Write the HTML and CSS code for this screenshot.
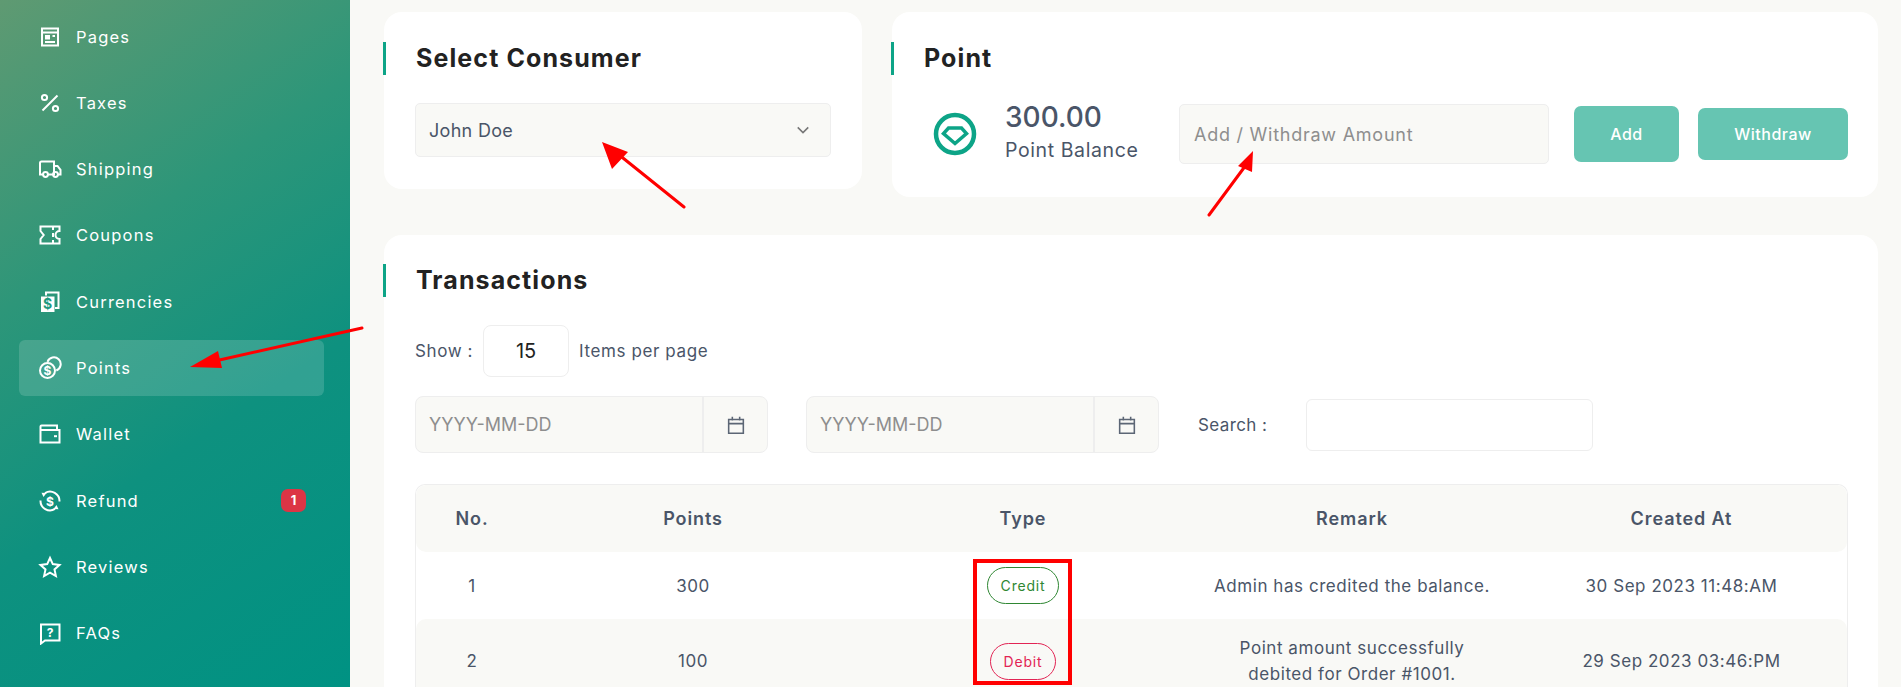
FILE: index.html
```html
<!DOCTYPE html>
<html lang="en">

<head>
   <meta charset="UTF-8">
   <meta name="viewport" content="width=device-width, initial-scale=1.0">
   <title>Points</title>
   <link rel="stylesheet" href="styles.css">
</head>

<body>
   <div class="page">
      <!-- Sidebar -->
      <nav class="sidebar">
         <a class="nav-item">
            <svg class="nav-icon" viewBox="0 0 24 24"><path d="M4 3.500h16v17H4zM4 7.500h16"/><path class="solid" d="M7 10h5v4.500H7z"/><path d="M14.500 11H17M7 17h10"/></svg>
            <span>Pages</span>
         </a>
         <a class="nav-item">
            <svg class="nav-icon" viewBox="0 0 24 24"><circle cx="6.500" cy="6.500" r="2.600"/><circle cx="17.500" cy="17.500" r="2.600"/><path d="M19.500 4.500l-15 15"/></svg>
            <span>Taxes</span>
         </a>
         <a class="nav-item">
            <svg class="nav-icon" viewBox="0 0 24 24"><path d="M5 17.500H2V6a1.500 1.500 0 0 1 1.500-1.500H16v13H10M16 9h3.500l3 3.800v4.700H20M16 17.500H15"/><circle cx="7.500" cy="17.500" r="2.400"/><circle cx="17.500" cy="17.500" r="2.400"/></svg>
            <span>Shipping</span>
         </a>
         <a class="nav-item">
            <svg class="nav-icon" viewBox="0 0 24 24"><path d="M2.500 3.500h19V8a3.800 3.800 0 0 0 0 8v4.500h-19V16l3.200-4-3.200-4z"/><path d="M15 3.500V7M15 10v4M15 17v3.500"/></svg>
            <span>Coupons</span>
         </a>
         <a class="nav-item">
            <svg class="nav-icon" viewBox="0 0 24 24"><path d="M8 5.500v-3h12.500v15.500H17"/><path class="solid" d="M3 6.500h13.500V22H3z"/><text class="nav-glyph" x="9.700" y="19">$</text></svg>
            <span>Currencies</span>
         </a>
         <a class="nav-item active">
            <svg class="nav-icon" viewBox="0 0 24 24"><circle cx="9.500" cy="14.500" r="7.500"/><path d="M9.500 5.800A6.800 6.800 0 1 1 18.300 14.500"/><text class="nav-glyph outline" x="9.500" y="19">$</text></svg>
            <span>Points</span>
         </a>
         <a class="nav-item">
            <svg class="nav-icon" viewBox="0 0 24 24"><path d="M2.500 8V20.500H21.500V8H2.500zM2.500 8V4.500a1 1 0 0 1 1-1H19V8"/><path class="solid" d="M16 13.200h3v2h-3z"/></svg>
            <span>Wallet</span>
         </a>
         <a class="nav-item">
            <svg class="nav-icon" viewBox="0 0 24 24"><path d="M7 4.100A9.500 9.500 0 0 1 21.500 12.500M17 19.900A9.500 9.500 0 0 1 2.500 11.500"/><path class="solid" d="M3.500 3.800l5 .2-3 4zM20.500 20.200l-5-.2 3-4z"/><text class="nav-glyph outline" x="12" y="16.600">$</text></svg>
            <span>Refund</span>
            <b class="nav-badge">1</b>
         </a>
         <a class="nav-item">
            <svg class="nav-icon" viewBox="0 0 24 24"><path d="M12 3l2.800 6.100 6.700.8-5 4.500 1.400 6.600-5.900-3.300-5.900 3.300 1.400-6.600-5-4.500 6.700-.8z"/></svg>
            <span>Reviews</span>
         </a>
         <a class="nav-item">
            <svg class="nav-icon" viewBox="0 0 24 24"><path d="M3 3.500h18.500v16H7L3 22.500z"/><text class="nav-glyph outline" x="12.200" y="16">?</text></svg>
            <span>FAQs</span>
         </a>
      </nav>

      <main class="content">
         <div class="top-row">
            <section class="card card-consumer">
               <h2 class="card-title">Select Consumer</h2>
               <div class="select-box">
                  <span>John Doe</span>
                  <svg class="chevron" viewBox="0 0 16 16"><path d="M2 5l6 6 6-6"/></svg>
               </div>
            </section>

            <section class="card card-point">
               <h2 class="card-title">Point</h2>
               <div class="point-row">
                  <svg class="point-icon" viewBox="0 0 44 44"><circle cx="22" cy="22" r="19"/><path class="point-gem" d="M15.500 16h13l5 5.500-11.500 10-11.500-10z"/></svg>
                  <div class="balance">
                     <div class="balance-value">300.00</div>
                     <div class="balance-label">Point Balance</div>
                  </div>
                  <input class="field amount" type="text" placeholder="Add / Withdraw Amount">
                  <button class="btn btn-add">Add</button>
                  <button class="btn btn-withdraw">Withdraw</button>
               </div>
            </section>
         </div>

         <section class="card card-transactions">
            <h2 class="card-title">Transactions</h2>

            <div class="show-row">
               <span class="show-label">Show :</span>
               <div class="show-count">15</div>
               <span>Items per page</span>
            </div>

            <div class="filter-row">
               <div class="date-group">
                  <input class="date-input" type="text" placeholder="YYYY-MM-DD">
                  <span class="date-btn"><svg viewBox="0 0 24 24"><path d="M4 6h16v15H4zM4 10.500h16M8 3v4M16 3v4"/></svg></span>
               </div>
               <div class="date-group">
                  <input class="date-input" type="text" placeholder="YYYY-MM-DD">
                  <span class="date-btn"><svg viewBox="0 0 24 24"><path d="M4 6h16v15H4zM4 10.500h16M8 3v4M16 3v4"/></svg></span>
               </div>
               <label class="search-label">Search :</label>
               <input class="search-input" type="text">
            </div>

            <div class="table-wrap">
               <table class="tx-table">
                  <colgroup>
                     <col class="col-no">
                     <col class="col-points">
                     <col class="col-type">
                     <col class="col-remark">
                     <col class="col-date">
                  </colgroup>
                  <thead>
                     <tr>
                        <th>No.</th>
                        <th>Points</th>
                        <th>Type</th>
                        <th>Remark</th>
                        <th>Created At</th>
                     </tr>
                  </thead>
                  <tbody>
                     <tr>
                        <td>1</td>
                        <td>300</td>
                        <td><span class="pill pill-credit">Credit</span></td>
                        <td>Admin has credited the balance.</td>
                        <td>30 Sep 2023 11:48:AM</td>
                     </tr>
                     <tr class="row-alt">
                        <td>2</td>
                        <td>100</td>
                        <td><span class="pill pill-debit">Debit</span></td>
                        <td class="cell-wrap">Point amount successfully<br>debited for Order #1001.</td>
                        <td>29 Sep 2023 03:46:PM</td>
                     </tr>
                  </tbody>
               </table>
            </div>
         </section>
      </main>
   </div>

   <!-- Anotaciones rojas sobre la captura -->
   <svg class="marks" viewBox="0 0 1901 687">
      <path class="mark-line" d="M362 328L215 361M684 207L618 154M1209 215L1246 165"/>
      <path class="mark-head" d="M190 367L218 351L222 368zM602 142L628 152L612 169zM1253 151L1252 172L1238 166z"/>
      <rect class="mark-box" x="975" y="561" width="95" height="122"/>
   </svg>
</body>

</html>
```

FILE: styles.css
```css
* {
   box-sizing: border-box;
}

html,
body {
   margin: 0;
   height: 100%;
   overflow: hidden;
}

body {
   font-family: Inter, "Liberation Sans", sans-serif;
   color: #4a5568;
   background: #f9f9f6;
}

.page {
   display: flex;
   height: 687px;
   overflow: hidden;
}

/* Sidebar */
.sidebar {
   flex: 0 0 350px;
   display: flex;
   flex-direction: column;
   gap: 10.3px;
   padding: 8.500px 26px 0 19px;
   background: linear-gradient(146deg, #5f9a72 0%, #2d9679 34%, #0e917f 62%, #009283 100%);
}

.nav-item {
   display: flex;
   align-items: center;
   flex: 0 0 56px;
   padding: 0 19px;
   border-radius: 6px;
   color: #fff;
   font-size: 16.5px;
   letter-spacing: 1.2px;
}

.nav-item.active {
   background: rgba(255, 255, 255, 0.15);
}

.nav-icon {
   flex: 0 0 24px;
   width: 24px;
   height: 24px;
   margin-right: 14px;
   fill: none;
   stroke: #fff;
   stroke-width: 2;
}

.nav-icon .solid {
   fill: #fff;
   stroke: none;
}

.nav-glyph {
   fill: #1f9a80;
   stroke: none;
   font-size: 14px;
   font-weight: 700;
   letter-spacing: 0;
   text-anchor: middle;
}

.nav-glyph.outline {
   fill: #fff;
   font-size: 12px;
}

.nav-badge {
   margin-left: auto;
   margin-right: -1px;
   width: 25px;
   height: 23px;
   border-radius: 7px;
   background: #dc3545;
   font-size: 13px;
   font-weight: 700;
   letter-spacing: 0;
   line-height: 23px;
   text-align: center;
}

/* Main */
.content {
   flex: 1;
   padding: 12px 23px 0 34px;
}

.top-row {
   display: flex;
   align-items: flex-start;
   gap: 30px;
   margin-bottom: 38px;
}

.card {
   background: #fff;
   border-radius: 18px;
   padding: 30px 30px 32px 31px;
}

.card-consumer {
   flex: 0 0 478px;
   padding-right: 31px;
}

.card-point {
   flex: 1;
}

.card-title {
   margin: 0 0 28px -32px;
   padding-left: 30px;
   border-left: 3px solid #0da487;
   height: 33px;
   font-size: 25px;
   font-weight: 700;
   line-height: 33px;
   letter-spacing: 1.100px;
   color: #222;
}

.select-box {
   display: flex;
   align-items: center;
   justify-content: space-between;
   height: 54px;
   padding: 0 20px 0 13px;
   background: #f9f9f6;
   border: 1px solid #eee;
   border-radius: 5px;
   font-size: 18px;
   letter-spacing: 0.3px;
}

.chevron {
   width: 14px;
   height: 14px;
   fill: none;
   stroke: #777;
   stroke-width: 1.8;
}

.point-row {
   display: flex;
   align-items: center;
   height: 62px;
}

.point-icon {
   flex: 0 0 44px;
   width: 44px;
   height: 44px;
   margin: 0 28px 0 10px;
   fill: none;
   stroke: #0da487;
   stroke-width: 4.500;
}

.point-gem {
   stroke-width: 3.500;
}

.balance {
   flex: 0 0 174px;
}

.balance-value {
   font-size: 28px;
   font-weight: 500;
   line-height: 33px;
}

.balance-label {
   font-size: 19.500px;
   line-height: 33px;
   letter-spacing: 0.600px;
}

.field {
   background: #f9f9f6;
   border: 1px solid #eee;
   border-radius: 5px;
   font: inherit;
}

.amount {
   flex: 0 0 370px;
   height: 60px;
   margin-right: 25px;
   padding: 0 14px;
   font-size: 18px;
   letter-spacing: 0.750px;
}

.field::placeholder,
.date-input::placeholder {
   color: #8e8e8e;
   opacity: 1;
}

.btn {
   border: 0;
   border-radius: 7px;
   background: #66c5b2;
   color: #fff;
   font: inherit;
   font-size: 16px;
   font-weight: 500;
   letter-spacing: 0.500px;
}

.btn-add {
   flex: 0 0 105px;
   height: 56px;
   margin-right: 19px;
}

.btn-withdraw {
   flex: 0 0 150px;
   height: 52px;
}

/* Transactions */
.card-transactions {
   padding-top: 29px;
}

.show-row {
   display: flex;
   align-items: center;
   gap: 10px;
   font-size: 17px;
   letter-spacing: 0.600px;
   white-space: nowrap;
}

.show-label {
   flex: 0 0 57px;
}

.show-count {
   width: 86px;
   height: 52px;
   border: 1px solid #eee;
   border-radius: 8px;
   color: #222;
   font-size: 20px;
   letter-spacing: 0;
   line-height: 50px;
   text-align: center;
}

.filter-row {
   display: flex;
   align-items: center;
   margin: 19px 0 31px;
}

.date-group {
   display: flex;
   flex: 0 0 353px;
   min-width: 0;
   height: 57px;
   margin-right: 38px;
   background: #f9f9f6;
   border: 1px solid #eee;
   border-radius: 8px;
}

.date-input {
   flex: 1;
   width: 0;
   min-width: 0;
   padding: 0 13px;
   background: transparent;
   border: 0;
   font: inherit;
   font-size: 18px;
}

.date-btn {
   display: flex;
   align-items: center;
   justify-content: center;
   flex: 0 0 65px;
   border-left: 2px solid #eee;
}

.date-btn svg {
   width: 22px;
   height: 22px;
   fill: none;
   stroke: #5c6675;
   stroke-width: 1.7;
}

.search-label {
   flex: 0 0 108px;
   margin-left: 1px;
   font-size: 17px;
   letter-spacing: 0.400px;
}

.search-input {
   flex: 0 0 287px;
   height: 52px;
   background: #fff;
   border: 1px solid #eee;
   border-radius: 6px;
}

.table-wrap {
   border: 1px solid #eee;
   border-bottom: 0;
   border-radius: 10px 10px 0 0;
}

.tx-table {
   width: 100%;
   table-layout: fixed;
   border-collapse: separate;
   border-spacing: 0;
   text-align: center;
}

.col-no { width: 112px; }
.col-points { width: 330px; }
.col-type { width: 330px; }
.col-remark { width: 328px; }

.tx-table th {
   height: 67px;
   background: #f9f9f6;
   font-size: 18px;
   font-weight: 600;
   letter-spacing: 0.900px;
}

.tx-table td {
   height: 67px;
   padding: 0;
   font-size: 17px;
   letter-spacing: 0.550px;
}

.tx-table thead th:first-child {
   border-radius: 10px 0 0 10px;
}

.tx-table thead th:last-child {
   border-radius: 0 10px 10px 0;
}

.row-alt td {
   background: #f9f9f6;
}

.row-alt td:first-child {
   border-top-left-radius: 10px;
}

.row-alt td:last-child {
   border-top-right-radius: 10px;
}

.row-alt .cell-wrap {
   height: 84px;
   line-height: 26px;
}

.pill {
   display: inline-block;
   height: 37px;
   padding: 0 13px;
   border: 1px solid;
   border-radius: 19px;
   font-size: 14px;
   letter-spacing: 0.800px;
   line-height: 35px;
}

.pill-credit {
   color: #2f8733;
}

.pill-debit {
   color: #e22454;
}

/* Flechas y recuadro rojos encima de todo */
.marks {
   position: absolute;
   top: 0;
   left: 0;
   width: 1901px;
   height: 687px;
   pointer-events: none;
}

.mark-line {
   fill: none;
   stroke: #f00;
   stroke-width: 3;
   stroke-linecap: round;
}

.mark-head {
   fill: #f00;
}

.mark-box {
   fill: none;
   stroke: #f00;
   stroke-width: 4;
}
```
